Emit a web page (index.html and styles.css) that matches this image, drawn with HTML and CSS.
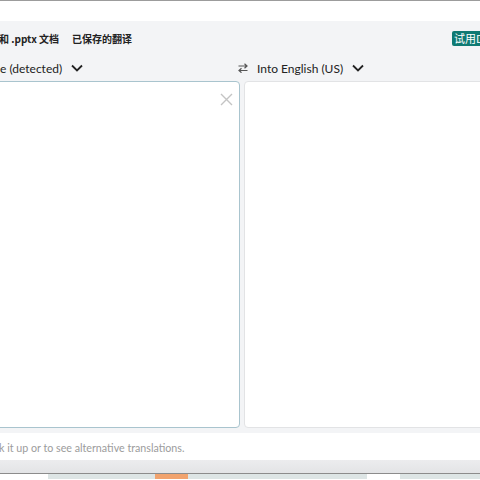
FILE: index.html
```html
<!DOCTYPE html>
<html lang="zh">
<head>
<meta charset="utf-8">
<link rel="stylesheet" href="styles.css">
</head>
<body>
<div class="topline"></div>
<div class="whitebar"></div>
<div class="app">
  <div class="nav">
    <div class="links">
      <span class="link first">和 .pptx 文档</span>
      <span class="link">已保存的翻译</span>
    </div>
    <span class="badge">试用D</span>
  </div>
  <div class="langs">
    <div class="lang-left">
      <span class="lang">e (detected)</span>
      <svg class="chev" width="12" height="8" viewBox="0 0 12 8"><path d="M1 1.5 L6 6.5 L11 1.5" fill="none" stroke="#222" stroke-width="1.8"/></svg>
    </div>
    <div class="lang-right">
      <svg class="swap" width="10" height="10" viewBox="0 0 10 10"><path d="M0.5 3 H9 M6.5 0.8 L9 3 L6.5 5.2 M9.5 7.5 H1 M3.5 5.3 L1 7.5 L3.5 9.7" fill="none" stroke="#555" stroke-width="1.2"/></svg>
      <span class="lang">Into English (US)</span>
      <svg class="chev" width="12" height="8" viewBox="0 0 12 8"><path d="M1 1.5 L6 6.5 L11 1.5" fill="none" stroke="#222" stroke-width="1.8"/></svg>
    </div>
  </div>
  <div class="boxes">
    <div class="box source">
      <svg class="close" width="13" height="13" viewBox="0 0 13 13"><path d="M1 1 L12 12 M12 1 L1 12" fill="none" stroke="#c4c4c4" stroke-width="1.4"/></svg>
    </div>
    <div class="box target"></div>
  </div>
  <div class="hint">k it up or to see alternative translations.</div>
</div>
<div class="statusbar"></div>
<div class="taskbar">
  <span class="tb w48 white"></span>
  <span class="tb w107"></span>
  <span class="tb w33 orange"></span>
  <span class="tb w179"></span>
  <span class="tb w33 white"></span>
  <span class="tb rest"></span>
</div>
</body>
</html>
```
FILE: styles.css
```css
* { box-sizing: border-box; }
html, body { margin: 0; padding: 0; }
body {
  width: 480px;
  height: 480px;
  overflow: hidden;
  font-family: Lato, "Noto Sans", "Noto Sans CJK SC", sans-serif;
  color: #1b1b1b;
  background: #fff;
}
.topline { height: 1px; background: #9c9c9c; }
.whitebar { height: 20px; background: #fff; }
.app {
  background: #f3f4f6;
  display: flex;
  flex-direction: column;
}
.nav {
  height: 34px;
  display: flex;
  align-items: center;
}
.links { display: flex; gap: 13px; }
.link {
  font-family: "Noto Sans CJK SC", sans-serif;
  font-size: 10px;
  font-weight: 700;
  color: #222;
}
.link.first { margin-left: -1px; }
.badge {
  margin-left: auto;
  flex-shrink: 0;
  width: 28px;
  overflow: hidden;
  white-space: nowrap;
  background: #0f7a73;
  color: #fff;
  font-family: "Noto Sans CJK SC", sans-serif;
  font-size: 11px;
  line-height: 15px;
  padding: 0 0 0 2px;
  border-radius: 2px 0 0 2px;
}
.langs {
  height: 26px;
  display: flex;
  align-items: center;
}
.lang-left {
  width: 238px;
  display: flex;
  align-items: center;
}
.lang-right {
  display: flex;
  align-items: center;
}
.lang { font-size: 12px; color: #222; }
.chev { margin-left: 9px; }
.swap { margin-right: 9px; }
.boxes {
  display: flex;
  gap: 4px;
  height: 347px;
}
.box {
  background: #fff;
  border-radius: 4px;
  position: relative;
}
.source {
  width: 250px;
  margin-left: -10px;
  border: 1px solid #a9c4ce;
}
.target {
  flex: 1;
  margin-right: -10px;
  border: 1px solid #e2e3e5;
}
.close {
  position: absolute;
  top: 11px;
  right: 6px;
}
.hint {
  margin-top: 5px;
  height: 27px;
  background: #fff;
  font-size: 10.7px;
  color: #9c9c9c;
  line-height: 29px;
  text-indent: -1px;
}
.statusbar {
  height: 14px;
  background: linear-gradient(#ececee, #e3e4e6);
  border-bottom: 1px solid #8c8c8c;
}
.taskbar {
  height: 5px;
  display: flex;
}
.tb { display: block; height: 100%; background: #dde5e5; flex-shrink: 0; }
.tb.white { background: #fff; }
.tb.orange { background: #f1a36e; }
.w48 { width: 48px; }
.w107 { width: 107px; }
.w33 { width: 33px; }
.w179 { width: 179px; }
.rest { flex: 1; }
```
